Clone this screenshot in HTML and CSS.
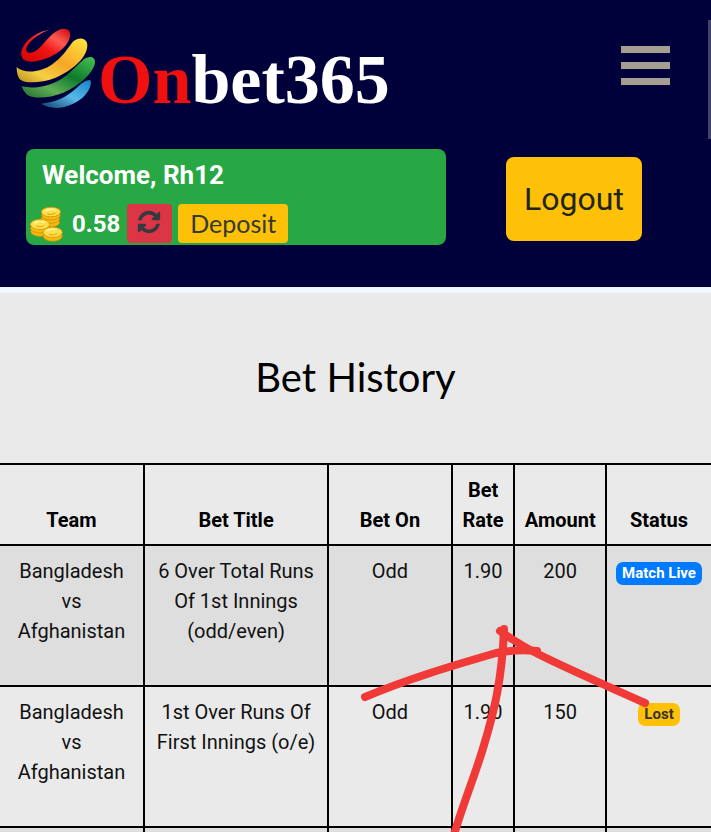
FILE: index.html
```html
<!DOCTYPE html>
<html lang="en">
<head>
<meta charset="utf-8">
<meta name="viewport" content="width=device-width, initial-scale=1">
<title>Bet History</title>
<link rel="stylesheet" href="styles.css">
</head>
<body>
<header class="site-header">
  <div class="top-bar">
    <a class="brand" href="#">
      <svg class="brand-mark" viewBox="48 38 240 240" aria-hidden="true">
        <defs>
          <linearGradient id="red" x1="0" y1="1" x2="1" y2="0"><stop offset="0" stop-color="#d80000"/><stop offset=".45" stop-color="#f01515"/><stop offset=".7" stop-color="#ff5a55"/><stop offset="1" stop-color="#c80808"/></linearGradient>
          <linearGradient id="yellow" x1="0" y1="1" x2="1" y2="0"><stop offset="0" stop-color="#b98d18"/><stop offset=".25" stop-color="#f3cf45"/><stop offset=".55" stop-color="#f7a826"/><stop offset="1" stop-color="#ffe640"/></linearGradient>
          <linearGradient id="green" x1="0" y1="1" x2="1" y2="0"><stop offset="0" stop-color="#1d6b2c"/><stop offset=".3" stop-color="#5fae55"/><stop offset=".6" stop-color="#0d7a2b"/><stop offset="1" stop-color="#4cc254"/></linearGradient>
          <linearGradient id="blue" x1="0" y1="1" x2="1" y2="0"><stop offset="0" stop-color="#0b3a6b"/><stop offset=".5" stop-color="#58b9e6"/><stop offset="1" stop-color="#1583c9"/></linearGradient>
        </defs>
        <path fill="url(#red)" d="M148 43C95 52 60 92 64 120C68 144 100 142 130 132C172 120 215 85 210 52C207 38 188 38 176 44C150 58 138 78 118 98C106 110 86 118 80 108C72 90 108 58 148 43Z"/>
        <path fill="url(#yellow)" d="M50 155C70 175 120 172 155 148C190 125 205 95 220 78C235 64 262 66 262 90C262 125 220 165 165 188C120 205 70 205 58 190C52 180 50 170 50 155Z"/>
        <path fill="url(#green)" d="M65 213C100 222 150 213 185 190C215 170 235 145 250 133C265 120 285 122 285 140C283 170 240 210 190 232C145 250 95 252 78 235C72 228 68 222 65 213Z"/>
        <path fill="url(#blue)" d="M122 265C165 262 200 245 225 222C245 203 255 195 270 194C276 200 272 220 255 240C235 262 200 278 170 278C150 277 135 272 122 265Z"/>
      </svg>
      <span class="brand-name"><span class="brand-on">On</span>bet365</span>
    </a>
    <button class="menu-button" type="button" aria-label="Menu"><span></span><span></span><span></span></button>
  </div>
  <div class="account-bar">
    <section class="account">
      <p class="welcome">Welcome, Rh12</p>
      <div class="balance-row">
        <svg class="coins" viewBox="46 204 96 104" aria-hidden="true">
          <g fill="#f7b90c" stroke="#c98a0a" stroke-width="2">
            <ellipse cx="106" cy="251" rx="26" ry="14"/><ellipse cx="105" cy="241" rx="27" ry="13"/><ellipse cx="107" cy="231" rx="27" ry="13"/><ellipse cx="107" cy="221" rx="28" ry="14" fill="#ffe04a"/>
            <ellipse cx="76" cy="278" rx="28" ry="14"/><ellipse cx="75" cy="268" rx="28" ry="14"/><ellipse cx="75" cy="257" rx="28" ry="15" fill="#ffe04a"/>
            <ellipse cx="112" cy="291" rx="28" ry="15"/><ellipse cx="112" cy="280" rx="28" ry="15" fill="#ffe04a"/>
          </g>
          <g fill="none" stroke="#fff6a5" stroke-width="4">
            <path d="M90 218q16-9 30-2M58 254q15-9 30-2M95 276q15-9 30-2"/>
          </g>
          <g fill="none" stroke="#e0a01c" stroke-width="3"><path d="M96 226q12 5 24-2M64 262q12 5 24-2M101 286q12 5 24-2"/></g>
        </svg>
        <strong class="balance">0.58</strong>
        <button class="refresh" type="button" aria-label="Refresh balance">
          <svg viewBox="0 0 1792 1792" aria-hidden="true"><path d="M1639 1056q0 5-1 7-64 268-268 434.5t-478 166.5q-146 0-282.5-55t-243.5-157l-129 129q-19 19-45 19t-45-19-19-45v-448q0-26 19-45t45-19h448q26 0 45 19t19 45-19 45l-137 137q71 66 161 102t187 36q134 0 250-65t186-179q11-17 53-117 8-23 30-23h192q13 0 22.5 9.5t9.5 22.5zm25-800v448q0 26-19 45t-45 19h-448q-26 0-45-19t-19-45 19-45l138-138q-148-137-349-137-134 0-250 65t-186 179q-11 17-53 117-8 23-30 23h-199q-13 0-22.5-9.5t-9.5-22.5v-7q65-268 270-434.5t480-166.5q146 0 284 55.5t245 156.5l130-129q19-19 45-19t45 19 19 45z"/></svg>
        </button>
        <a class="deposit" href="#">Deposit</a>
      </div>
    </section>
    <div class="logout-cell"><button class="logout" type="button">Logout</button></div>
  </div>
  <div class="scroll-thumb"></div>
</header>
<main class="history">
  <h1>Bet History</h1>
  <table class="bets">
    <colgroup><col class="col-team"><col class="col-title"><col class="col-on"><col class="col-rate"><col class="col-amount"><col></colgroup>
    <thead>
      <tr><th scope="col">Team</th><th scope="col">Bet Title</th><th scope="col">Bet On</th><th scope="col">Bet Rate</th><th scope="col">Amount</th><th scope="col">Status</th></tr>
    </thead>
    <tbody>
      <tr><td>Bangladesh<br>vs<br>Afghanistan</td><td>6 Over Total Runs Of 1st Innings (odd/even)</td><td>Odd</td><td>1.90</td><td>200</td><td><span class="badge live">Match Live</span></td></tr>
      <tr><td>Bangladesh<br>vs<br>Afghanistan</td><td>1st Over Runs Of First Innings (o/e)</td><td>Odd</td><td>1.90</td><td>150</td><td><span class="badge lost">Lost</span></td></tr>
      <tr><td></td><td></td><td></td><td></td><td></td><td></td></tr>
    </tbody>
  </table>
</main>
<svg class="marker" viewBox="0 0 711 832" preserveAspectRatio="xMidYMin meet" aria-hidden="true">
  <path d="M365 697C410 678 455 665 496 653Q516 649 537 651"/>
  <path d="M500 631Q520 645 538 654C572 671 612 688 645 703"/>
  <path d="M504 629C502 680 494 712 484 745C475 776 462 806 453 838"/>
</svg>
</body>
</html>
```
FILE: styles.css
```css
* {
  box-sizing: border-box;
}

body {
  margin: 0;
  height: 100vh;
  display: flex;
  flex-direction: column;
  position: relative;
  overflow: hidden;
  background: #eaeaea;
  color: #111;
  font-family: Roboto, "Liberation Sans", sans-serif;
  font-size: 20px;
  line-height: 30px;
}

button {
  border: 0;
  font-family: inherit;
}

.site-header {
  flex: none;
  position: relative;
  padding: 27px 0 42px;
  background: #00003b;
  border-bottom: 6px solid #f0f7ff;
}

.top-bar {
  display: flex;
  justify-content: space-between;
  align-items: flex-start;
  padding: 0 41px 0 16px;
}

.brand {
  display: flex;
  gap: 2px;
  color: #fff;
  text-decoration: none;
}

.brand-mark {
  width: 80px;
  height: 82px;
}

.brand-name {
  padding-top: 13px;
  font: bold 70px/80px "Liberation Serif", serif;
}

.brand-on {
  color: #f01010;
}

.menu-button {
  display: flex;
  flex-direction: column;
  gap: 9px;
  width: 49px;
  margin-top: 19px;
  padding: 0;
  background: none;
}

.menu-button span {
  height: 7px;
  background: #a79e92;
}

.account-bar {
  display: flex;
  align-items: center;
  padding: 29px 26px 0;
}

.account {
  flex: 0 0 420px;
  height: 96px;
  padding: 9px 4px 0;
  border-radius: 8px;
  background: #28a745;
  color: #fff;
}

.welcome {
  margin: 0 12px 11px;
  font-size: 26px;
  font-weight: bold;
  line-height: 35px;
}

.balance-row {
  display: flex;
  align-items: center;
  height: 39px;
}

.coins {
  width: 33px;
  height: 36px;
  margin-right: 9px;
}

.balance {
  font-size: 24px;
  margin-right: 7px;
}

.refresh {
  display: grid;
  place-items: center;
  width: 45px;
  height: 39px;
  margin-right: 6px;
  padding: 0 2px 3px 0;
  border-radius: 4px;
  background: #dc3545;
}

.refresh svg {
  width: 26px;
  height: 26px;
  fill: #343a40;
}

.deposit {
  height: 39px;
  padding: 0 12px;
  border-radius: 4px;
  background: #ffc107;
  color: #343a30;
  font: 25px/39px Lato, sans-serif;
  text-decoration: none;
}

.logout-cell {
  flex: 1;
  display: flex;
  justify-content: center;
  padding-left: 17px;
}

.logout {
  width: 136px;
  height: 84px;
  margin-top: 4px;
  border-radius: 8px;
  background: #ffc107;
  color: #212519;
  font-size: 32px;
}

.scroll-thumb {
  position: absolute;
  top: 20px;
  right: 0;
  width: 3px;
  height: 119px;
  background: #444563;
}

.history {
  flex: 1;
  min-height: 0;
  overflow: hidden;
}

h1 {
  margin: 60px 0 61px;
  color: #000;
  font: 40px/49px Lato, sans-serif;
  text-align: center;
}

.bets {
  width: 100%;
  table-layout: fixed;
  border-collapse: collapse;
  border-top: 2px solid #000;
  text-align: center;
}

.col-team { width: 20.25%; }
.col-title { width: 25.9%; }
.col-on { width: 17.4%; }
.col-rate { width: 8.8%; }
.col-amount { width: 12.9%; }

.bets th,
.bets td {
  padding: 10px 8px 9px;
  border-bottom: 2px solid #000;
  border-right: 2px solid #000;
  vertical-align: top;
}

.bets th:last-child,
.bets td:last-child {
  border-right: 0;
}

.bets th {
  color: #000;
  vertical-align: bottom;
}

.bets td {
  height: 141px;
}

.bets tbody tr:nth-child(odd) {
  background: #dedede;
}

.badge {
  display: inline-block;
  padding: 4px 6px;
  border-radius: 7px;
  font-size: 15px;
  font-weight: bold;
  line-height: 15px;
  white-space: nowrap;
}

.live {
  background: #007bff;
  color: #fff;
}

.lost {
  background: #ffc107;
  color: #333;
}

.marker {
  position: absolute;
  top: 0;
  left: 0;
  width: 100%;
  pointer-events: none;
  fill: none;
  stroke: #f03a38;
  stroke-width: 8px;
  stroke-linecap: round;
  stroke-linejoin: round;
}
```
